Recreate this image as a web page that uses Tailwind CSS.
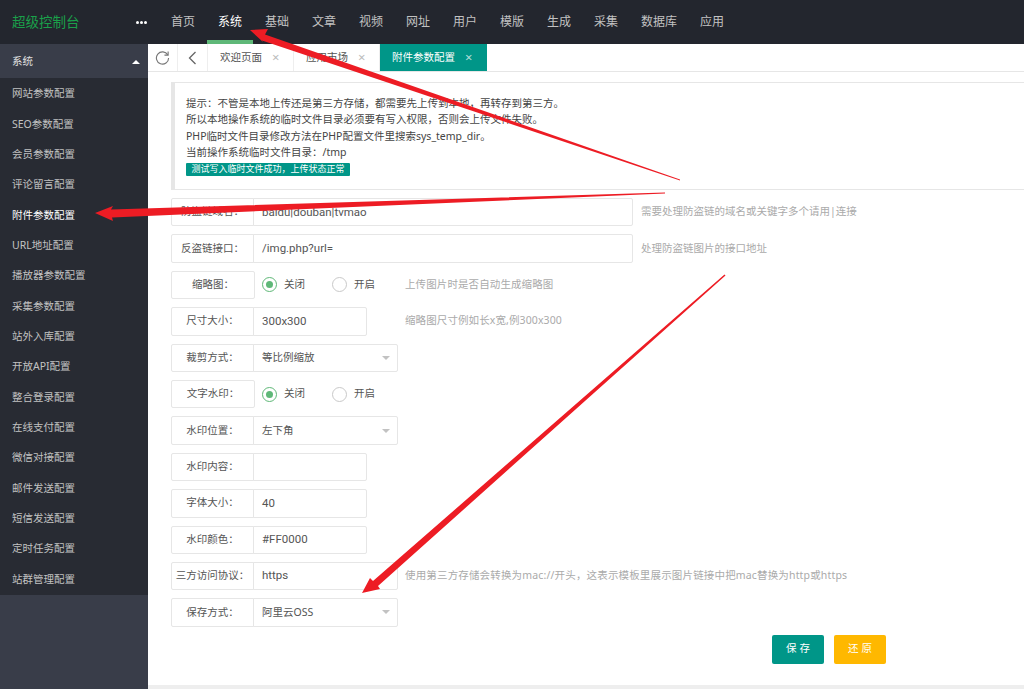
<!DOCTYPE html>
<html lang="zh-CN">
<head>
  <meta charset="UTF-8" />
  <meta name="viewport" content="width=device-width, initial-scale=1.0" />
  <title>超级控制台</title>
  <script src="https://cdn.jsdelivr.net/npm/@tailwindcss/browser@4"></script>
</head>
<body class="relative h-[689px] overflow-hidden bg-white font-['Noto_Sans','Noto_Sans_CJK_SC',sans-serif] text-[10.5px] text-[#555]">
  <!-- 顶部导航 -->
  <header class="flex h-[44px] items-center bg-[#23262e]">
    <div class="w-[136px] pl-[12px] text-[13.5px] text-[#1aa04a]">超级控制台</div>
    <div class="flex w-[35px] gap-[1px]">
      <span class="h-[3px] w-[3px] rounded-full bg-white"></span>
      <span class="h-[3px] w-[3px] rounded-full bg-white"></span>
      <span class="h-[3px] w-[3px] rounded-full bg-white"></span>
    </div>
    <nav class="flex h-full gap-[23px] text-[12px] text-[#c2c2c2]">
      <a class="flex w-[24px] items-center justify-center">首页</a>
      <a class="relative flex w-[24px] items-center justify-center text-white">系统<span class="absolute bottom-0 left-[-11px] h-[4px] w-[46px] bg-[#5fb878]"></span></a>
      <a class="flex w-[24px] items-center justify-center">基础</a>
      <a class="flex w-[24px] items-center justify-center">文章</a>
      <a class="flex w-[24px] items-center justify-center">视频</a>
      <a class="flex w-[24px] items-center justify-center">网址</a>
      <a class="flex w-[24px] items-center justify-center">用户</a>
      <a class="flex w-[24px] items-center justify-center">模版</a>
      <a class="flex w-[24px] items-center justify-center">生成</a>
      <a class="flex w-[24px] items-center justify-center">采集</a>
      <a class="flex w-[36px] items-center justify-center">数据库</a>
      <a class="flex w-[24px] items-center justify-center">应用</a>
    </nav>
  </header>

  <div class="flex h-[645px]">
    <!-- 左侧菜单 -->
    <aside class="flex w-[148px] shrink-0 flex-col bg-[#393d49] text-[#c2c2c2]">
      <div class="flex h-[34px] items-center justify-between pl-[12px] pr-[8px] pt-[1px] text-[#e2e2e2]">
        <span>系统</span>
        <span class="h-0 w-0 border-x-[4.5px] border-b-[4.5px] border-x-transparent border-b-white"></span>
      </div>
      <ul class="bg-[#282b33] pt-[1px]">
        <li class="flex h-[30.35px] items-center pl-[12px]">网站参数配置</li>
        <li class="flex h-[30.35px] items-center pl-[12px]">SEO参数配置</li>
        <li class="flex h-[30.35px] items-center pl-[12px]">会员参数配置</li>
        <li class="flex h-[30.35px] items-center pl-[12px]">评论留言配置</li>
        <li class="flex h-[30.35px] items-center pl-[12px] text-white">附件参数配置</li>
        <li class="flex h-[30.35px] items-center pl-[12px]">URL地址配置</li>
        <li class="flex h-[30.35px] items-center pl-[12px]">播放器参数配置</li>
        <li class="flex h-[30.35px] items-center pl-[12px]">采集参数配置</li>
        <li class="flex h-[30.35px] items-center pl-[12px]">站外入库配置</li>
        <li class="flex h-[30.35px] items-center pl-[12px]">开放API配置</li>
        <li class="flex h-[30.35px] items-center pl-[12px]">整合登录配置</li>
        <li class="flex h-[30.35px] items-center pl-[12px]">在线支付配置</li>
        <li class="flex h-[30.35px] items-center pl-[12px]">微信对接配置</li>
        <li class="flex h-[30.35px] items-center pl-[12px]">邮件发送配置</li>
        <li class="flex h-[30.35px] items-center pl-[12px]">短信发送配置</li>
        <li class="flex h-[30.35px] items-center pl-[12px]">定时任务配置</li>
        <li class="flex h-[30.35px] items-center pl-[12px]">站群管理配置</li>
      </ul>
    </aside>

    <main class="flex min-w-0 flex-1 flex-col">
      <!-- 标签栏 -->
      <div class="flex h-[28px] shrink-0 border-b border-[#e6e6e6]">
        <div class="flex w-[30px] items-center justify-center border-r border-[#eee]">
          <svg class="h-[15px] w-[15px]" viewBox="0 0 16 16" fill="none" stroke="#777" stroke-width="1.2"><path d="M13.6 5.2A6.5 6.5 0 1 0 14.5 8.5"/><path d="M14 1.6v3.9h-3.9"/></svg>
        </div>
        <div class="flex w-[30px] items-center justify-center border-r border-[#eee]">
          <svg class="h-[14px] w-[9px]" viewBox="0 0 9 14" fill="none" stroke="#666" stroke-width="1.3"><path d="M7.5 1 1.5 7l6 6"/></svg>
        </div>
        <div class="flex w-[86px] items-center border-r border-[#eee] pl-[12px]">
          <span>欢迎页面</span><span class="ml-[10px] text-[13px] leading-none text-[#bbb]">×</span>
        </div>
        <div class="flex w-[86px] items-center border-r border-[#eee] pl-[12px]">
          <span>应用市场</span><span class="ml-[10px] text-[13px] leading-none text-[#bbb]">×</span>
        </div>
        <div class="flex w-[107px] items-center bg-[#009688] pl-[12px] text-white">
          <span>附件参数配置</span><span class="ml-[10px] text-[13px] leading-none text-white/70">×</span>
        </div>
      </div>

      <div class="flex-1 overflow-hidden pl-[23px] pt-[10px]">
        <!-- 提示 -->
        <blockquote class="mb-[8px] h-[108px] border-y border-l-4 border-[#e6e6e6] pl-[11px] pt-[12px] leading-[16.4px] text-[#444]">
          <p>提示：不管是本地上传还是第三方存储，都需要先上传到本地，再转存到第三方。</p>
          <p>所以本地操作系统的临时文件目录必须要有写入权限，否则会上传文件失败。</p>
          <p>PHP临时文件目录修改方法在PHP配置文件里搜索sys_temp_dir。</p>
          <p>当前操作系统临时文件目录：/tmp</p>
          <p class="mt-[2px] flex h-[13px] w-[164px] items-center justify-center rounded-[1px] bg-[#009688] text-[9px] text-white">测试写入临时文件成功，上传状态正常</p>
        </blockquote>

        <!-- 表单 -->
        <form>
          <div class="mb-[8px] flex h-[28.4px] items-center">
            <label class="flex h-full w-[83px] items-center justify-center rounded-l-[2px] border border-[#e6e6e6]">防盗链域名：</label>
            <div class="-ml-px flex h-full w-[380px] items-center rounded-r-[2px] border border-[#e6e6e6] pl-[8px] font-['Roboto','Noto_Sans_CJK_SC',sans-serif] text-[11.5px]">baidu|douban|tvmao</div>
            <span class="ml-[8px] text-[#aaa]">需要处理防盗链的域名或关键字多个请用|连接</span>
          </div>
          <div class="mb-[8px] flex h-[28.4px] items-center">
            <label class="flex h-full w-[83px] items-center justify-center rounded-l-[2px] border border-[#e6e6e6]">反盗链接口：</label>
            <div class="-ml-px flex h-full w-[380px] items-center rounded-r-[2px] border border-[#e6e6e6] pl-[8px] font-['Roboto','Noto_Sans_CJK_SC',sans-serif] text-[11.5px]">/img.php?url=</div>
            <span class="ml-[8px] text-[#aaa]">处理防盗链图片的接口地址</span>
          </div>
          <div class="mb-[8px] flex h-[28.4px] items-center">
            <label class="flex h-full w-[84px] items-center justify-center rounded-[2px] border border-[#e6e6e6]">缩略图：</label>
            <span class="ml-[7px] flex h-[15px] w-[15px] items-center justify-center rounded-full border border-[#5fb878]"><span class="h-[7px] w-[7px] rounded-full bg-[#5fb878]"></span></span>
            <span class="ml-[7px]">关闭</span>
            <span class="ml-[27px] h-[15px] w-[15px] rounded-full border border-[#c9c9c9]"></span>
            <span class="ml-[7px]">开启</span>
            <span class="ml-[30px] tracking-[0.1px] text-[#aaa]">上传图片时是否自动生成缩略图</span>
          </div>
          <div class="mb-[8px] flex h-[28.4px] items-center">
            <label class="flex h-full w-[83px] items-center justify-center rounded-l-[2px] border border-[#e6e6e6]">尺寸大小：</label>
            <div class="-ml-px flex h-full w-[114px] items-center rounded-r-[2px] border border-[#e6e6e6] pl-[8px] font-['Roboto','Noto_Sans_CJK_SC',sans-serif] text-[11.5px]">300x300</div>
            <span class="ml-[38px] tracking-[0.1px] text-[#aaa]">缩略图尺寸例如长x宽,例300x300</span>
          </div>
          <div class="mb-[8px] flex h-[28.4px] items-center">
            <label class="flex h-full w-[83px] items-center justify-center rounded-l-[2px] border border-[#e6e6e6]">裁剪方式：</label>
            <div class="-ml-px flex h-full w-[145px] items-center justify-between rounded-r-[2px] border border-[#e6e6e6] pl-[8px] pr-[7px]">
              <span>等比例缩放</span>
              <span class="h-0 w-0 border-x-[4.5px] border-t-[4.5px] border-x-transparent border-t-[#c2c2c2]"></span>
            </div>
          </div>
          <div class="mb-[8px] flex h-[28.4px] items-center">
            <label class="flex h-full w-[84px] items-center justify-center rounded-[2px] border border-[#e6e6e6]">文字水印：</label>
            <span class="ml-[7px] flex h-[15px] w-[15px] items-center justify-center rounded-full border border-[#5fb878]"><span class="h-[7px] w-[7px] rounded-full bg-[#5fb878]"></span></span>
            <span class="ml-[7px]">关闭</span>
            <span class="ml-[27px] h-[15px] w-[15px] rounded-full border border-[#c9c9c9]"></span>
            <span class="ml-[7px]">开启</span>
          </div>
          <div class="mb-[8px] flex h-[28.4px] items-center">
            <label class="flex h-full w-[83px] items-center justify-center rounded-l-[2px] border border-[#e6e6e6]">水印位置：</label>
            <div class="-ml-px flex h-full w-[145px] items-center justify-between rounded-r-[2px] border border-[#e6e6e6] pl-[8px] pr-[7px]">
              <span>左下角</span>
              <span class="h-0 w-0 border-x-[4.5px] border-t-[4.5px] border-x-transparent border-t-[#c2c2c2]"></span>
            </div>
          </div>
          <div class="mb-[8px] flex h-[28.4px] items-center">
            <label class="flex h-full w-[83px] items-center justify-center rounded-l-[2px] border border-[#e6e6e6]">水印内容：</label>
            <div class="-ml-px h-full w-[114px] rounded-r-[2px] border border-[#e6e6e6]"></div>
          </div>
          <div class="mb-[8px] flex h-[28.4px] items-center">
            <label class="flex h-full w-[83px] items-center justify-center rounded-l-[2px] border border-[#e6e6e6]">字体大小：</label>
            <div class="-ml-px flex h-full w-[114px] items-center rounded-r-[2px] border border-[#e6e6e6] pl-[8px] font-['Roboto','Noto_Sans_CJK_SC',sans-serif] text-[11.5px]">40</div>
          </div>
          <div class="mb-[8px] flex h-[28.4px] items-center">
            <label class="flex h-full w-[83px] items-center justify-center rounded-l-[2px] border border-[#e6e6e6]">水印颜色：</label>
            <div class="-ml-px flex h-full w-[114px] items-center rounded-r-[2px] border border-[#e6e6e6] pl-[8px] font-['Roboto','Noto_Sans_CJK_SC',sans-serif] text-[11.5px]">#FF0000</div>
          </div>
          <div class="mb-[8px] flex h-[28.4px] items-center">
            <label class="flex h-full w-[83px] items-center justify-center rounded-l-[2px] border border-[#e6e6e6]">三方访问协议：</label>
            <div class="-ml-px flex h-full w-[145px] items-center rounded-r-[2px] border border-[#e6e6e6] pl-[8px] font-['Roboto','Noto_Sans_CJK_SC',sans-serif] text-[11.5px]">https</div>
            <span class="ml-[7px] tracking-[0.16px] text-[#aaa]">使用第三方存储会转换为mac://开头，这表示模板里展示图片链接中把mac替换为http或https</span>
          </div>
          <div class="mb-[8px] flex h-[28.4px] items-center">
            <label class="flex h-full w-[83px] items-center justify-center rounded-l-[2px] border border-[#e6e6e6]">保存方式：</label>
            <div class="-ml-px flex h-full w-[145px] items-center justify-between rounded-r-[2px] border border-[#e6e6e6] pl-[8px] pr-[7px]">
              <span>阿里云OSS</span>
              <span class="h-0 w-0 border-x-[4.5px] border-t-[4.5px] border-x-transparent border-t-[#c2c2c2]"></span>
            </div>
          </div>
          <div class="ml-[601px] flex gap-[10px]">
            <button type="button" class="h-[29px] w-[52px] rounded-[2px] bg-[#009688] pl-[3px] tracking-[3px] text-white">保存</button>
            <button type="button" class="h-[29px] w-[52px] rounded-[2px] bg-[#ffb800] pl-[3px] tracking-[3px] text-white">还原</button>
          </div>
        </form>
      </div>
      <div class="h-[4px] shrink-0 bg-[#eee]"></div>
    </main>
  </div>

  <!-- 截图上的红色箭头 -->
  <svg class="pointer-events-none absolute left-0 top-0 h-[689px] w-[1024px]" viewBox="0 0 1024 689" fill="#ed1c24">
    <polygon points="250,30 268,29 265,34.5 680,179.5 680,180.5 262,40.5 263,42" />
    <polygon points="95,213 113,206 111,209.5 665,192.5 665,193.5 112,217.5 113,221" />
    <polygon points="362,593 370,578 373,581 724.5,274.5 725.5,275.5 378,586 380,589" />
  </svg>
</body>
</html>
